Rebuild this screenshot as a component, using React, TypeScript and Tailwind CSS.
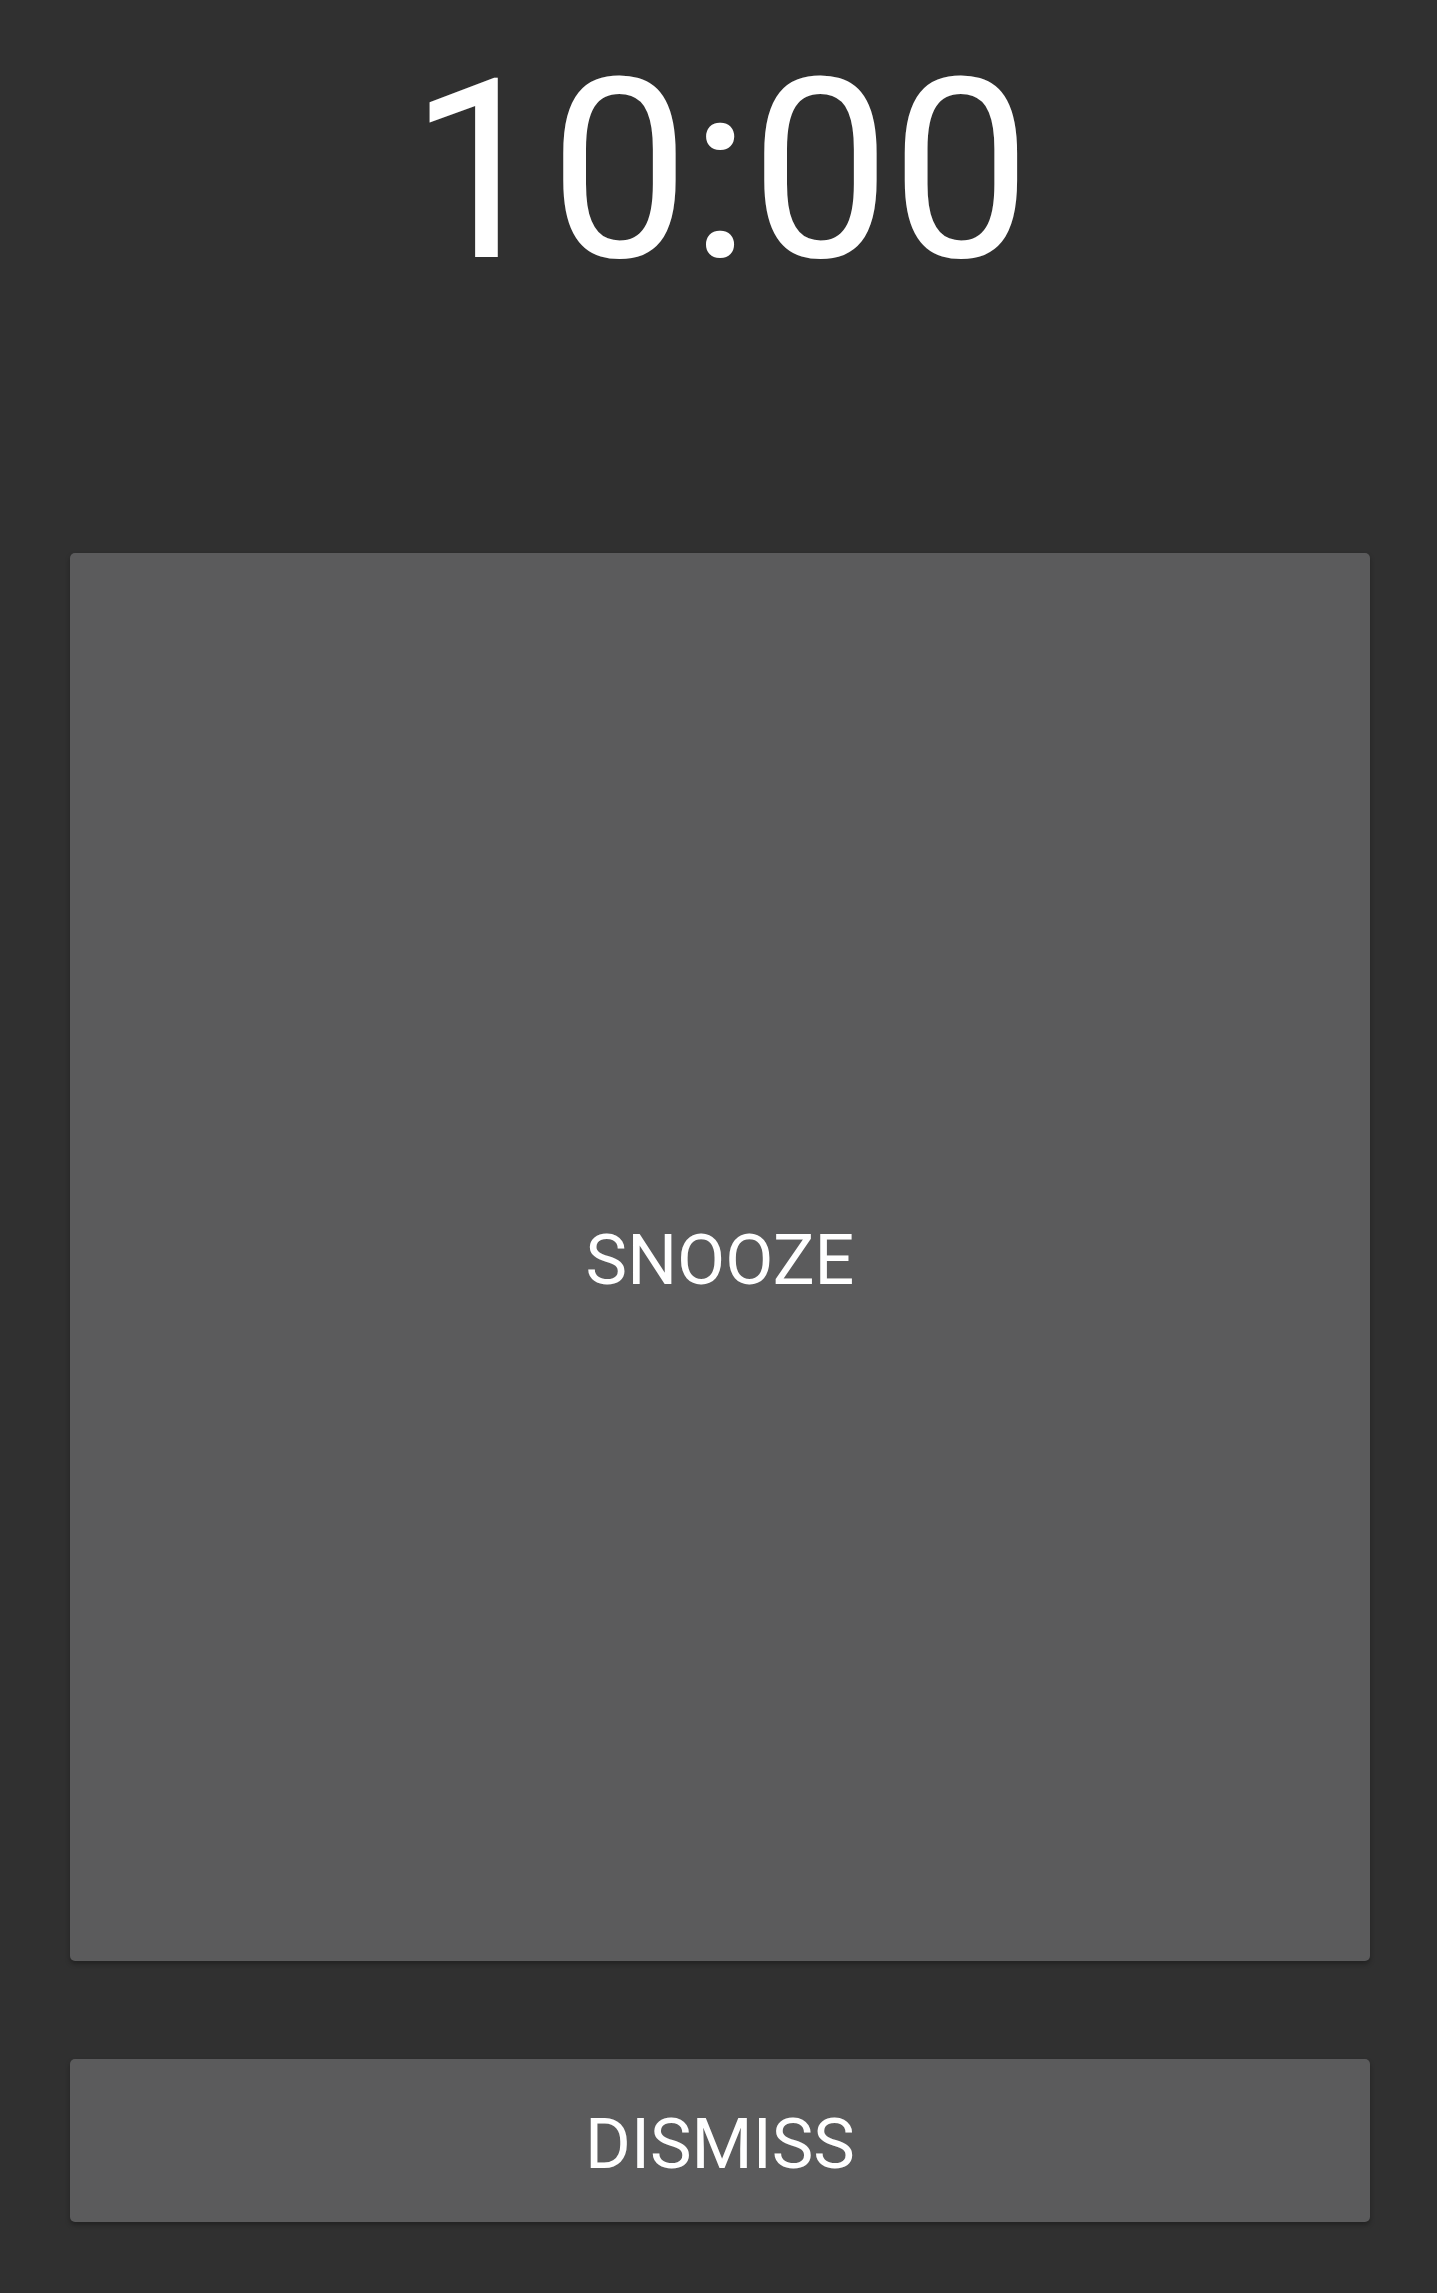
export default function App() {
  return (
    <div
      className="flex h-[2293px] w-full flex-col bg-[#303030] pl-[70px] pr-[67px] pb-[71px] text-white"
      style={{ fontFamily: "Roboto, 'Liberation Sans', sans-serif" }}
    >
      <div className="flex h-[553px] shrink-0 justify-center">
        <div className="mt-[25px] text-[250px] font-normal leading-[normal]">10:00</div>
      </div>
      <button className="flex h-[1408px] shrink-0 items-center justify-center rounded-[5px] bg-[#5b5b5c] pt-[6px] text-[70px] leading-[normal] shadow-[0_3px_5px_rgba(0,0,0,0.3)]">
        SNOOZE
      </button>
      <button className="mt-[98px] flex h-[163px] shrink-0 items-center justify-center rounded-[5px] bg-[#5b5b5c] pt-[6px] text-[70px] leading-[normal] shadow-[0_3px_5px_rgba(0,0,0,0.3)]">
        DISMISS
      </button>
    </div>
  );
}
